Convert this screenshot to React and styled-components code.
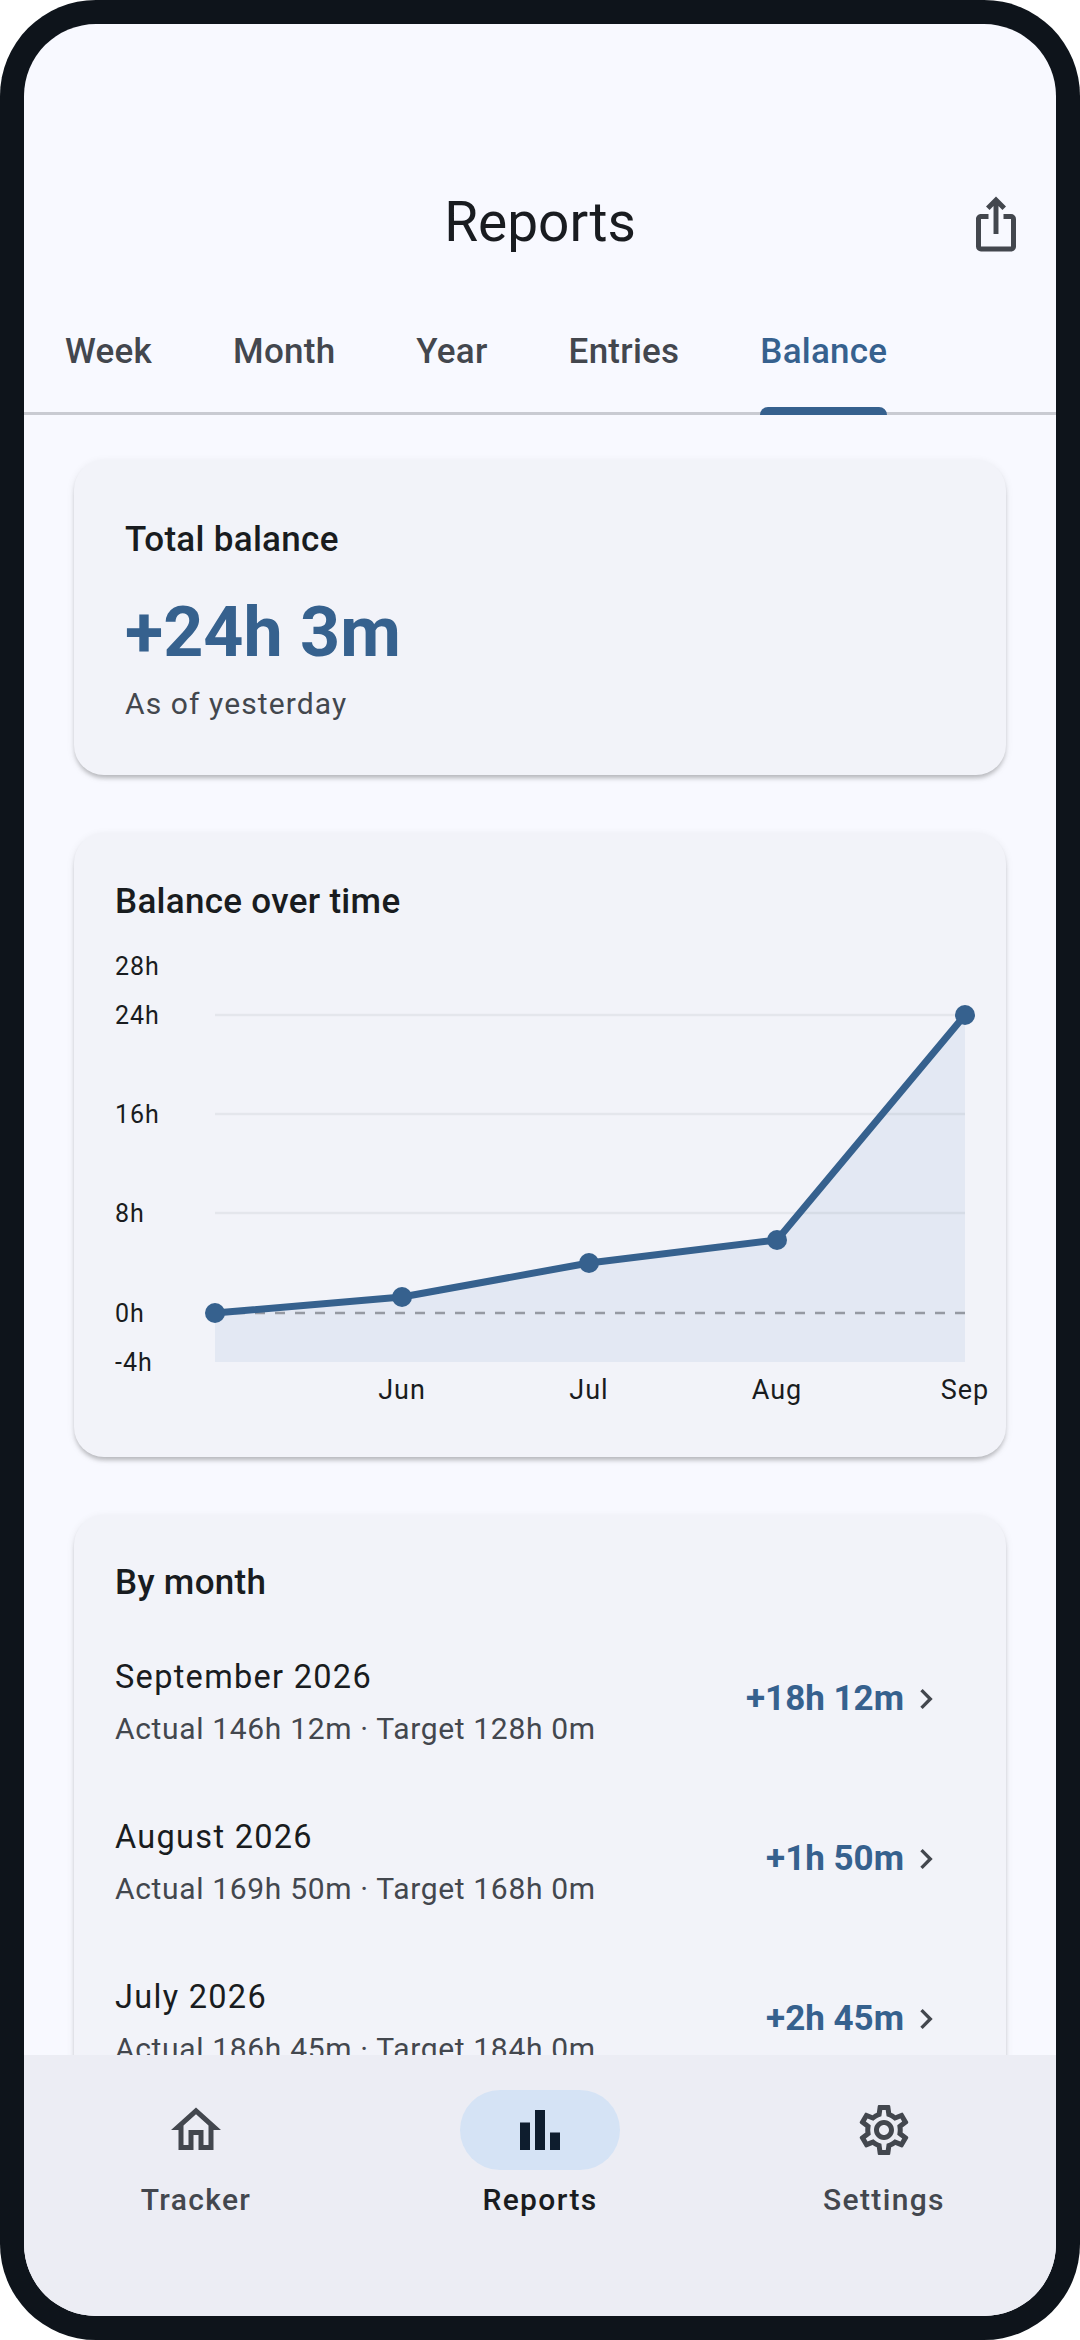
import React from 'react';
import styled, { createGlobalStyle } from 'styled-components';
import { MdIosShare, MdOutlineHome, MdOutlineSettings, MdBarChart, MdChevronRight } from 'react-icons/md';

const GlobalStyle = createGlobalStyle`
    html, body {
        margin: 0;
        background: #fff;
        font-family: Roboto, "Noto Sans", sans-serif;
    }
    * { box-sizing: border-box; }
`;

const Frame = styled.div`
    width: 1080px;
    height: 2340px;
    padding: 24px;
    background: #0e141b;
    border-radius: 96px;
`;

const Screen = styled.div`
    height: 100%;
    display: flex;
    flex-direction: column;
    overflow: hidden;
    border-radius: 72px;
    background: #f8f9ff;
`;

const Header = styled.header`
    height: 120px;
    margin-top: 138px;
    padding-right: 30px;
    display: flex;
    align-items: center;
    justify-content: flex-end;
    position: relative;
    color: #43474e;

    svg {
        margin-top: 3px;
    }
`;

const Title = styled.h1`
    position: absolute;
    left: 0;
    right: 0;
    margin: 0;
    text-align: center;
    font-size: 55px;
    font-weight: 400;
    color: #191c20;
`;

const Tabs = styled.nav`
    height: 133px;
    flex: none;
    padding: 9px 0 0 41px;
    display: flex;
    gap: 81px;
    border-bottom: 3px solid #c9cbd2;
`;

const Tab = styled.div`
    position: relative;
    display: flex;
    align-items: center;
    font-size: 35px;
    font-weight: 500;
    letter-spacing: 0.25px;
    color: ${props => (props.$active ? '#36618e' : '#43474e')};

    ${props => props.$active && `
        &::after {
            content: '';
            position: absolute;
            left: 0;
            right: 0;
            bottom: -3px;
            height: 8px;
            border-radius: 8px 8px 0 0;
            background: #36618e;
        }
    `}
`;

const Content = styled.main`
    flex: 1;
    min-height: 0;
    overflow: hidden;
    padding: 45px 50px 0;
    display: flex;
    flex-direction: column;
    gap: 58px;
`;

const Card = styled.section`
    flex: none;
    border-radius: 30px;
    background: #f2f3f9;
    box-shadow: 0 4px 4px -1px rgba(0, 0, 0, 0.22), 0 2px 8px rgba(0, 0, 0, 0.08);
`;

const SummaryCard = styled(Card)`
    height: 315px;
    padding: 56px 51px 0;
`;

const SummaryLabel = styled.div`
    font-size: 35px;
    line-height: 48px;
    font-weight: 500;
    letter-spacing: 0.3px;
    color: #191c20;
`;

const SummaryValue = styled.div`
    margin-top: 26px;
    font-size: 70px;
    line-height: 84px;
    font-weight: 700;
    color: #36618e;
`;

const SummaryNote = styled.div`
    margin-top: 9px;
    font-size: 30px;
    line-height: 42px;
    letter-spacing: 1.1px;
    color: #43474e;
`;

const ChartCard = styled(Card)`
    height: 624px;
    padding: 46px 0 0 41px;
`;

const CardTitle = styled.h2`
    margin: 0;
    font-size: 35px;
    line-height: 46px;
    font-weight: 500;
    letter-spacing: 0.3px;
    color: #191c20;
`;

const Chart = styled.svg`
    display: block;
    margin-top: 20px;
    font-family: Roboto, sans-serif;
`;

const AxisLabel = styled.text`
    font-size: 25px;
    letter-spacing: 1px;
    fill: #191c20;
`;

const MonthLabel = styled.text`
    font-size: 27px;
    letter-spacing: 1px;
    fill: #191c20;
`;

const MonthList = styled.div`
    margin-top: 15px;
`;

const MonthCard = styled(Card)`
    padding: 45px 60px 0 41px;
`;

const MonthRow = styled.div`
    height: 160px;
    display: flex;
    align-items: center;
    justify-content: space-between;
`;

const MonthName = styled.div`
    font-size: 32.5px;
    line-height: 48px;
    letter-spacing: 1.3px;
    color: #191c20;
`;

const MonthDetail = styled.div`
    margin-top: 7px;
    font-size: 30px;
    line-height: 42px;
    letter-spacing: 0.66px;
    color: #43474e;
`;

const MonthDelta = styled.div`
    margin-top: -5px;
    display: flex;
    align-items: center;
    gap: 2px;
    font-size: 35px;
    font-weight: 700;
    color: #36618e;

    svg {
        color: #43474e;
    }
`;

const BottomNav = styled.nav`
    flex: none;
    height: 261px;
    padding-top: 35px;
    display: grid;
    grid-template-columns: repeat(3, 1fr);
    background: #ecedf4;
    position: relative;
`;

const NavItem = styled.div`
    display: flex;
    flex-direction: column;
    align-items: center;
    color: ${props => (props.$active ? '#191c20' : '#43474e')};
`;

const NavIcon = styled.div`
    width: 160px;
    height: 80px;
    display: flex;
    align-items: center;
    justify-content: center;
    border-radius: 40px;
    background: ${props => (props.$active ? '#d5e3f5' : 'transparent')};
    color: ${props => (props.$active ? '#0e1d2e' : '#43474e')};
`;

const NavLabel = styled.div`
    margin-top: 10px;
    font-size: 30px;
    line-height: 40px;
    font-weight: 500;
    letter-spacing: 1.35px;
`;

const TABS = ['Week', 'Month', 'Year', 'Entries', 'Balance'];

const MONTHS = [
    { name: 'September 2026', detail: 'Actual 146h 12m · Target 128h 0m', delta: '+18h 12m' },
    { name: 'August 2026', detail: 'Actual 169h 50m · Target 168h 0m', delta: '+1h 50m' },
    { name: 'July 2026', detail: 'Actual 186h 45m · Target 184h 0m', delta: '+2h 45m' },
];

// chart coordinates, origin at the top left of the svg
const POINTS = [
    [100, 368],
    [287, 352],
    [474, 318],
    [662, 295],
    [850, 70],
];
const BASE_Y = 417;
const ZERO_Y = 368;
const GRID = [70, 169, 268];
const Y_LABELS = [
    ['28h', 21],
    ['24h', 70],
    ['16h', 169],
    ['8h', 268],
    ['0h', 368],
    ['-4h', 417],
];
const X_LABELS = ['Jun', 'Jul', 'Aug', 'Sep'];

function BalanceChart() {
    const line = POINTS.map(p => p.join(',')).join(' ');
    const area = `${POINTS[0][0]},${BASE_Y} ${line} ${POINTS[4][0]},${BASE_Y}`;

    return (
        <Chart width="891" height="475" viewBox="0 0 891 475">
            <polygon points={area} fill="#e3e8f3" />
            {GRID.map(y => (
                <line key={y} x1="100" x2="850" y1={y} y2={y} stroke="#191c20" strokeOpacity="0.06" strokeWidth="2.5" />
            ))}
            <line x1="100" x2="850" y1={ZERO_Y} y2={ZERO_Y} stroke="#73777f" strokeOpacity="0.7" strokeWidth="2.5" strokeDasharray="10 10" />
            <polyline points={line} fill="none" stroke="#36618e" strokeWidth="7" strokeLinejoin="round" />
            {POINTS.map(([x, y]) => (
                <circle key={x} cx={x} cy={y} r="10" fill="#36618e" />
            ))}
            {Y_LABELS.map(([label, y]) => (
                <AxisLabel key={label} x="0" y={y + 9}>{label}</AxisLabel>
            ))}
            {X_LABELS.map((label, i) => (
                <MonthLabel key={label} x={POINTS[i + 1][0]} y="454" textAnchor="middle">{label}</MonthLabel>
            ))}
        </Chart>
    );
}

function App() {
    return (
        <Frame>
            <GlobalStyle />
            <Screen>
                <Header>
                    <Title>Reports</Title>
                    <MdIosShare size={60} />
                </Header>
                <Tabs>
                    {TABS.map(tab => (
                        <Tab key={tab} $active={tab === 'Balance'}>{tab}</Tab>
                    ))}
                </Tabs>
                <Content>
                    <SummaryCard>
                        <SummaryLabel>Total balance</SummaryLabel>
                        <SummaryValue>+24h 3m</SummaryValue>
                        <SummaryNote>As of yesterday</SummaryNote>
                    </SummaryCard>
                    <ChartCard>
                        <CardTitle>Balance over time</CardTitle>
                        <BalanceChart />
                    </ChartCard>
                    <MonthCard>
                        <CardTitle>By month</CardTitle>
                        <MonthList>
                            {MONTHS.map(month => (
                                <MonthRow key={month.name}>
                                    <div>
                                        <MonthName>{month.name}</MonthName>
                                        <MonthDetail>{month.detail}</MonthDetail>
                                    </div>
                                    <MonthDelta>
                                        {month.delta}
                                        <MdChevronRight size={40} />
                                    </MonthDelta>
                                </MonthRow>
                            ))}
                        </MonthList>
                    </MonthCard>
                </Content>
                <BottomNav>
                    <NavItem>
                        <NavIcon><MdOutlineHome size={60} /></NavIcon>
                        <NavLabel>Tracker</NavLabel>
                    </NavItem>
                    <NavItem $active>
                        <NavIcon $active><MdBarChart size={60} /></NavIcon>
                        <NavLabel>Reports</NavLabel>
                    </NavItem>
                    <NavItem>
                        <NavIcon><MdOutlineSettings size={60} /></NavIcon>
                        <NavLabel>Settings</NavLabel>
                    </NavItem>
                </BottomNav>
            </Screen>
        </Frame>
    );
}

export default App;
